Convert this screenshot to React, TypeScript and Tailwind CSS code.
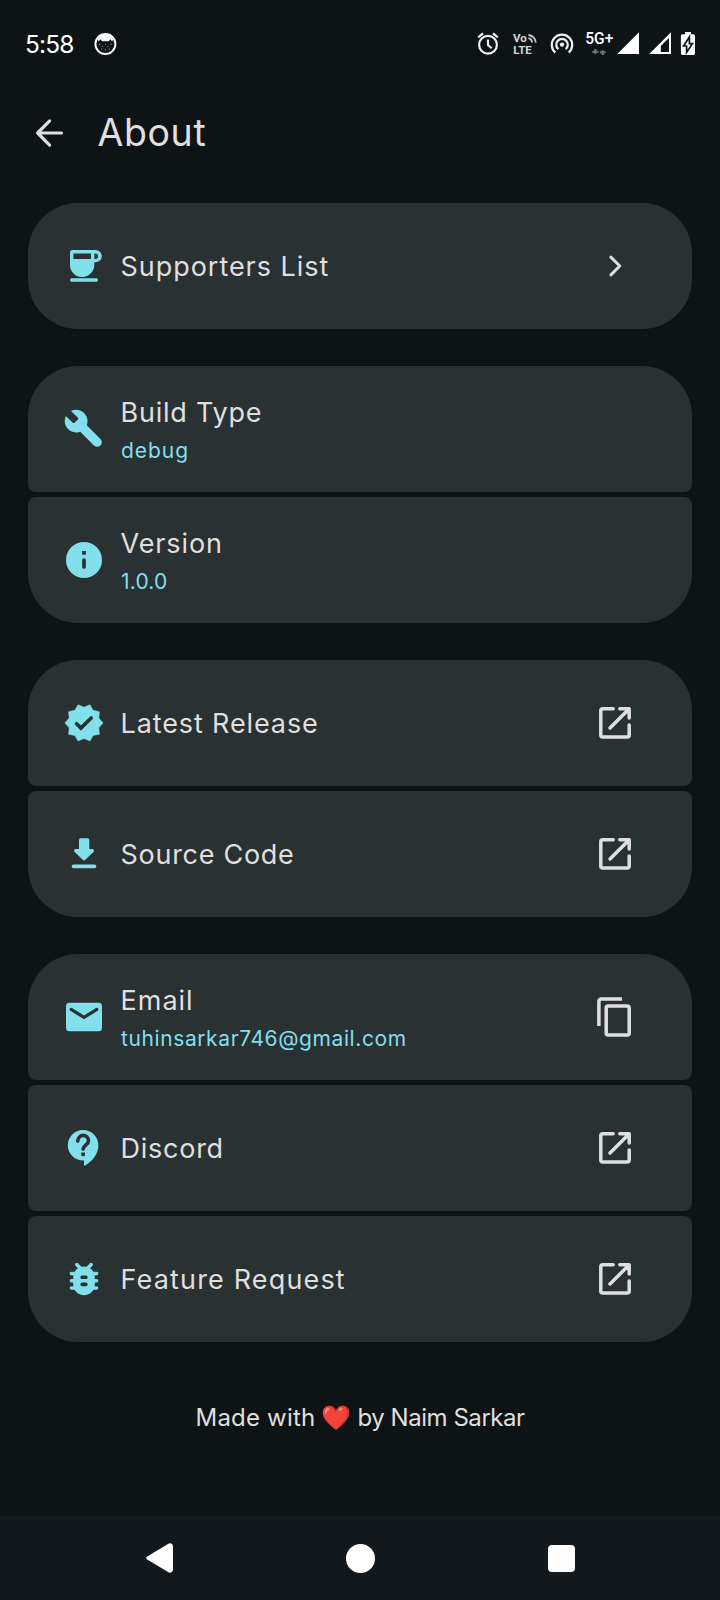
import type { ReactNode } from "react";

const CUT = "#293133";

function Box({ children }: { children: ReactNode }) {
  return (
    <svg viewBox="0 0 44 44" className="h-11 w-11 shrink-0" fill="none" stroke="none">
      {children}
    </svg>
  );
}

const CoffeeIcon = () => (
  <Box>
    <path
      fill="currentColor"
      fillRule="evenodd"
      d="M10.5 6H33.6a6.15 6.15 0 0 1 0 12.3H32.3V20A12.2 12.2 0 0 1 20.2 33A12.2 12.2 0 0 1 8 20V8.5A2.5 2.5 0 0 1 10.5 6ZM11.4 9.6V15H29V9.6ZM32.4 9.6V15H33.3a2.7 2.7 0 0 0 0-5.4Z"
    />
    <path d="M9.8 36H34.2" stroke="currentColor" strokeWidth="3.6" strokeLinecap="round" />
  </Box>
);

const WrenchIcon = () => (
  <Box>
    <path fill="currentColor" d="M9 3.9A11.4 11.4 0 1 1 3.9 9L10.6 15.6Q11.7 16.6 12.8 15.6L15.7 12.7Q16.7 11.6 15.7 10.6Z" />
    <path d="M20 20L35.2 35.2" stroke="currentColor" strokeWidth="9.2" strokeLinecap="round" />
  </Box>
);

const InfoIcon = () => (
  <Box>
    <circle cx="22" cy="22" r="18" fill="currentColor" />
    <path d="M22 22V29" stroke={CUT} strokeWidth="3.7" strokeLinecap="round" />
    <rect x="20.1" y="13" width="3.8" height="3.7" fill={CUT} />
  </Box>
);

const VerifiedIcon = () => (
  <Box>
    <path
      transform="translate(1.2 1.1) scale(1.733)"
      fill="currentColor"
      stroke="currentColor"
      strokeWidth=".3"
      strokeLinejoin="round"
      d="M23 12l-2.44-2.79.34-3.69-3.61-.82-1.89-3.2L12 2.96 8.6 1.5 6.71 4.69 3.1 5.5l.34 3.7L1 12l2.44 2.79-.34 3.7 3.61.82L8.6 22.5l3.4-1.47 3.4 1.46 1.89-3.19 3.61-.82-.34-3.69L23 12z"
    />
    <path d="M14.6 22.8L18.9 27.1L29.2 17" stroke={CUT} strokeWidth="3.7" strokeLinecap="round" />
  </Box>
);

const DownloadIcon = () => (
  <Box>
    <path
      fill="currentColor"
      d="M18.6 6.3H25.7a1.6 1.6 0 0 1 1.6 1.6V17H30.2c1.6 0 2.4 1.9 1.3 3.1L23.3 27.8a1.8 1.8 0 0 1-2.5 0L12.7 20.1C11.5 18.9 12.3 17 13.9 17H17V7.9A1.6 1.6 0 0 1 18.6 6.3Z"
    />
    <path d="M11.5 34.4H32.5" stroke="currentColor" strokeWidth="3.6" strokeLinecap="round" />
  </Box>
);

const MailIcon = () => (
  <Box>
    <rect x="4" y="7.8" width="36" height="28.4" rx="3.5" fill="currentColor" />
    <path d="M9.2 14.4L22 22.4L34.8 14.4" stroke={CUT} strokeWidth="3.2" strokeLinecap="round" strokeLinejoin="miter" />
  </Box>
);

const SupportIcon = () => (
  <Box>
    <g transform="translate(.4 .4) scale(1.8)">
      <path
        fill="currentColor"
        d="M11.5 2C6.81 2 3 5.81 3 10.5S6.81 19 11.5 19h.5v3c4.86-2.34 8-7 8-11.5C20 5.81 16.19 2 11.5 2z"
      />
      <path
        d="M8.5 8.1C8.7 6.3 10 5 11.5 5C13.2 5 14.5 6.3 14.5 8C14.5 10.1 11.8 10.4 11.5 12.6"
        stroke={CUT}
        strokeWidth="2"
        strokeLinecap="round"
      />
      <rect x="10.5" y="14.5" width="2" height="2" fill={CUT} />
    </g>
  </Box>
);

const BugIcon = () => (
  <Box>
    <g transform="translate(.4 .4) scale(1.8)">
      <rect x="6" y="5" width="12" height="16" rx="6" fill="currentColor" />
      <path
        d="M5 9H19M5 13H19M5 17H19M8 4L10 6M16 4L14 6"
        stroke="currentColor"
        strokeWidth="2"
        strokeLinecap="round"
      />
      <rect x="10" y="10" width="4" height="2" rx=".9" fill={CUT} />
      <rect x="10" y="14" width="4" height="2" rx=".9" fill={CUT} />
    </g>
  </Box>
);

const ChevronIcon = () => (
  <Box>
    <path d="M17.9 13.1L26.8 22L17.9 30.9" stroke="currentColor" strokeWidth="2.9" strokeLinecap="round" strokeLinejoin="round" />
  </Box>
);

const OpenIcon = () => (
  <Box>
    <g stroke="currentColor" strokeWidth="3.5" strokeLinecap="round" strokeLinejoin="round">
      <path d="M20.2 7.8H9.8a2 2 0 0 0-2 2V34.1a2 2 0 0 0 2 2H34.2a2 2 0 0 0 2-2V23.9" />
      <path d="M26.8 7.8H36.2V17M36 8L17 27" />
    </g>
  </Box>
);

const CopyIcon = () => (
  <Box>
    <g stroke="currentColor" strokeWidth="3.5">
      <path d="M29 4.1H8.3a2.4 2.4 0 0 0-2.4 2.4V31" />
      <rect x="13.2" y="11.1" width="23" height="28.9" rx="2" />
    </g>
  </Box>
);

type Item = {
  title: string;
  titleClass: string;
  sub?: string;
  subClass?: string;
  icon: ReactNode;
  action?: ReactNode;
};

const groups: Item[][] = [
  [{ title: "Supporters List", titleClass: "tracking-[0.96px]", icon: <CoffeeIcon />, action: <ChevronIcon /> }],
  [
    { title: "Build Type", titleClass: "tracking-[0.78px]", sub: "debug", subClass: "tracking-[0.95px]", icon: <WrenchIcon /> },
    { title: "Version", titleClass: "tracking-[0.9px]", sub: "1.0.0", subClass: "tracking-[0.2px]", icon: <InfoIcon /> },
  ],
  [
    { title: "Latest Release", titleClass: "tracking-[0.88px]", icon: <VerifiedIcon />, action: <OpenIcon /> },
    { title: "Source Code", titleClass: "tracking-[0.72px]", icon: <DownloadIcon />, action: <OpenIcon /> },
  ],
  [
    {
      title: "Email",
      titleClass: "tracking-[1px]",
      sub: "tuhinsarkar746@gmail.com",
      subClass: "tracking-[0.6px]",
      icon: <MailIcon />,
      action: <CopyIcon />,
    },
    { title: "Discord", titleClass: "tracking-[0.75px]", icon: <SupportIcon />, action: <OpenIcon /> },
    { title: "Feature Request", titleClass: "tracking-[1.16px]", icon: <BugIcon />, action: <OpenIcon /> },
  ],
];

function Row({ item, first, last }: { item: Item; first: boolean; last: boolean }) {
  return (
    <div
      className={`flex h-[126px] items-center bg-[#293133] pr-[55px] pl-[34px] ${first ? "rounded-t-[50px]" : "rounded-t-lg"} ${
        last ? "rounded-b-[50px]" : "rounded-b-lg"
      }`}
    >
      <div className="text-[#82dfec]">{item.icon}</div>
      <div className={`ml-[14.5px] flex-1 ${item.sub ? "pt-1.5" : "pt-0.5"}`}>
        <div className={`text-[27px] leading-[34px] whitespace-nowrap ${item.titleClass}`}>{item.title}</div>
        {item.sub && (
          <div className={`mt-1 pl-[0.5px] text-[21px] leading-[34px] whitespace-nowrap text-[#82dfec] ${item.subClass}`}>{item.sub}</div>
        )}
      </div>
      {item.action}
    </div>
  );
}

function StatusBar() {
  return (
    <div className="flex h-[88px] items-center pl-[25px] text-white">
      <span className="w-[69px] pt-px text-[24.5px] leading-none tracking-[-0.9px]">5:58</span>
      <svg viewBox="0 0 24 24" className="-mt-[1px] h-6 w-6" fill="none">
        <circle cx="11.4" cy="12" r="10" stroke="#fff" strokeWidth="1.9" />
        <path d="M3.6 7.6C5 4 8 2.4 11.4 2.4S17.8 4 19.2 7.6L18 9.5L16.6 7.3L14.6 9.2H8.2L6.2 7.3L4.8 9.5Z" fill="#fff" />
        <path d="M5 12.2h1.4M8.2 14.6h1M13.4 14.6h1M16.4 12.2h1.4M7 17h1.2M10.8 18h1.2M14.8 17H16M11 12.4h.9" stroke="#9ba0a1" strokeWidth="1" />
      </svg>
      <svg viewBox="470 28 230 32" className="ml-[352px] h-8 w-[230px] shrink-0" fill="none">
        <g stroke="#eee">
          <circle cx="488" cy="44.7" r="8.9" strokeWidth="2.2" />
          <path d="M488 39.5V45L491.6 48.2" strokeWidth="2.2" />
          <path d="M478.2 37.4L483 33.4M497.8 37.4L493 33.4" strokeWidth="2.3" />
        </g>
        <text fill="#d4d6d6" fontFamily="Roboto, sans-serif" fontWeight="700" fontSize="11.5">
          <tspan x="513" y="42.2">Vo</tspan>
          <tspan x="513.3" y="54.2">LTE</tspan>
        </text>
        <path d="M528.4 38.2a4.6 4.6 0 0 1 3.6 4.4M528.4 35a8 8 0 0 1 7.4 7.6" stroke="#c8caca" strokeWidth="1.8" />
        <g stroke="#eee" strokeWidth="2.2">
          <circle cx="562" cy="44.6" r="2.2" fill="#eee" stroke="none" />
          <path d="M558.4 49.2A5.8 5.8 0 1 1 565.6 49.2" />
          <path d="M555.3 52.6A10.2 10.2 0 1 1 568.7 52.6" />
        </g>
        <text x="585.3" y="43.8" fill="#fff" fontFamily="Roboto, sans-serif" fontWeight="500" fontSize="15.6" textLength="28" lengthAdjust="spacingAndGlyphs">
          5G+
        </text>
        <path
          d="M594 49.2H596.6V51H598.3V53H596.6L595.3 54.6L594 53H592.3V51H594ZM601.5 55H604.1V53.2H605.7V51.2H604.1L602.8 49.5L601.5 51.2H599.9V53.2H601.5Z"
          fill="#6d7172"
        />
        <path d="M639 32.3V54H617.3Z" fill="#fff" />
        <path fillRule="evenodd" d="M671 32.3V54H649.2ZM669 37.8L660.8 46V52H669Z" fill="#fff" />
        <path
          d="M685 32H691V34.2H693.3A1.7 1.7 0 0 1 695 35.9V53.3A1.7 1.7 0 0 1 693.3 55H682.6A1.7 1.7 0 0 1 680.9 53.3V35.9A1.7 1.7 0 0 1 682.6 34.2H685Z"
          fill="#fff"
        />
        <path d="M689.4 37L683.6 46H686.6V52.5L692.4 43.6H689.4Z" fill="#fff" stroke="#0e1416" strokeWidth="1.7" />
      </svg>
    </div>
  );
}

export default function App() {
  return (
    <div className="flex h-[1600px] w-[720px] flex-col overflow-hidden bg-[#0e1416] font-['Inter',sans-serif] text-[#e0dfdf]">
      <StatusBar />
      <header className="flex h-[90px] items-center pl-[27px]">
        <svg viewBox="0 0 44 44" className="h-11 w-11" fill="none">
          <path d="M22.6 9.9L10.6 22L22.6 34.1M10.6 22H34.5" stroke="currentColor" strokeWidth="3.2" strokeLinecap="round" strokeLinejoin="round" />
        </svg>
        <h1 className="ml-[26.5px] text-[37.5px] leading-none tracking-[0.6px]">About</h1>
      </header>
      <main className="mt-[25px] flex flex-col gap-[37px] px-7">
        {groups.map((g, i) => (
          <section key={i} className="flex flex-col gap-[5px]">
            {g.map((item, j) => (
              <Row key={item.title} item={item} first={j === 0} last={j === g.length - 1} />
            ))}
          </section>
        ))}
      </main>
      <footer className="mt-[60px] flex h-8 items-center pl-[195.5px] text-[24px] leading-8 whitespace-nowrap">
        <span className="w-[125.5px] tracking-[0.2px]">Made with</span>
        <span className="w-[36.5px] text-[24px]">❤️</span>
        <span className="tracking-[-0.46px]">by Naim Sarkar</span>
      </footer>
      <nav className="mt-auto flex h-[84px] items-center bg-[#13191c] pl-[146px]">
        <svg viewBox="0 0 27 30" className="h-[30px] w-[27px]" fill="#fff">
          <path d="M1.2 13.5L22 .9C24.3-.4 27 .8 27 3.500V26.500C27 29.200 24.300 30.400 22 29.100L1.200 16.500C-.2 15.600-.2 14.400 1.200 13.500Z" />
        </svg>
        <div className="ml-[173px] h-[29px] w-[29px] rounded-full bg-white" />
        <div className="ml-[173px] h-[27px] w-[27px] rounded-[4px] bg-white" />
      </nav>
    </div>
  );
}
